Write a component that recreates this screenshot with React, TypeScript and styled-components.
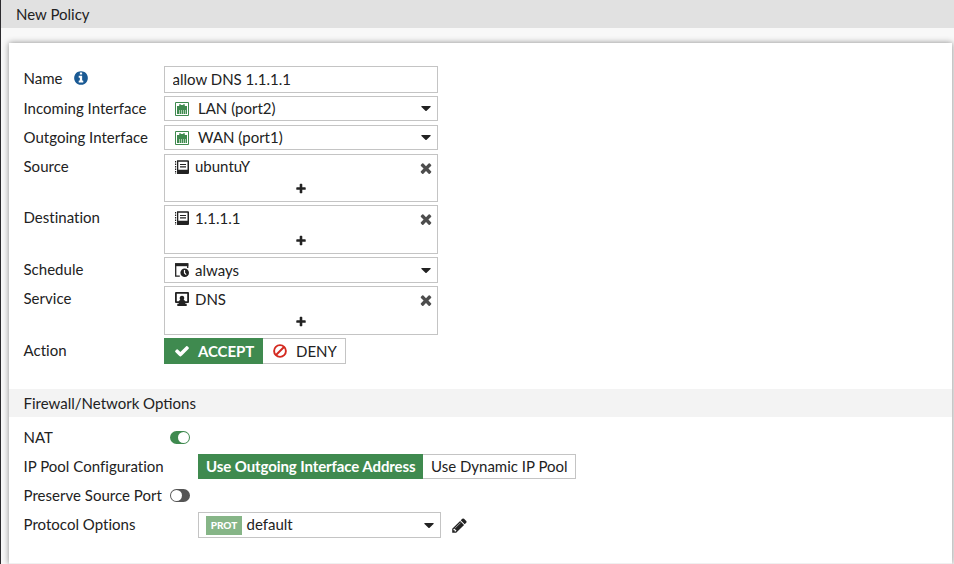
import React from "react";
import styled, { createGlobalStyle } from "styled-components";

const GlobalStyle = createGlobalStyle`
  * { box-sizing: border-box; }
  body {
    margin: 0;
    overflow: hidden;
    background: #f8f8f8;
    color: #222;
    font: 15px/20px Lato, "Liberation Sans", sans-serif;
  }
`;

const Page = styled.div`
  height: 564px;
  overflow: hidden;
  border-left: 1px solid #2c2b2e;
  display: flex;
  flex-direction: column;
`;

const TitleBar = styled.header`
  flex: none;
  height: 28px;
  padding: 4px 15px 0;
  background: #e1e1e1;
`;

const Panel = styled.main`
  flex: 1;
  display: flex;
  flex-direction: column;
  margin: 15px 2px 0 8px;
  padding-top: 23px;
  background: #fff;
  box-shadow: 0 0 6px rgba(0, 0, 0, 0.45);
`;

const Row = styled.div<{ $h: number; $gap?: number }>`
  flex: none;
  display: flex;
  align-items: flex-start;
  height: ${(p) => p.$h}px;
  margin-bottom: ${(p) => p.$gap ?? 3}px;
  padding-left: 14.5px;
`;

const Label = styled.div<{ $w?: number; $top?: number }>`
  flex: none;
  display: flex;
  align-items: center;
  gap: 10px;
  width: ${(p) => p.$w ?? 140.5}px;
  height: 20px;
  margin-top: ${(p) => p.$top ?? 2}px;
  letter-spacing: 0.02px;
  white-space: nowrap;
`;

const Box = styled.div<{ $w?: number }>`
  width: ${(p) => p.$w ?? 274}px;
  height: 100%;
  border: 1px solid #c4c4c4;
  background: #fff;
`;

const NameInput = styled.input`
  width: 274px;
  height: 100%;
  padding: 0 7px 1px 7.5px;
  border: 1px solid #c4c4c4;
  outline: none;
  color: inherit;
  font: inherit;
`;

const Select = styled(Box)<{ $pad?: number }>`
  display: flex;
  align-items: center;
  padding: 0 6px 0 ${(p) => p.$pad ?? 10}px;
`;

const List = styled(Box)`
  display: flex;
  flex-direction: column;
`;

const Entry = styled.div`
  display: flex;
  align-items: center;
  height: 24px;
  padding: 0 3px 0 10px;
`;

const Value = styled.span<{ $gap: number; $lift?: number }>`
  flex: 1;
  margin-left: ${(p) => p.$gap}px;
  padding-bottom: ${(p) => p.$lift ?? 0}px;
`;

const AddButton = styled.div<{ $top: number }>`
  display: flex;
  justify-content: center;
  padding-top: ${(p) => p.$top}px;
`;

const Segment = styled.div<{ $on?: boolean; $w: number; $pad?: number; $lift?: number }>`
  display: flex;
  align-items: center;
  width: ${(p) => p.$w}px;
  height: 100%;
  padding: 0 0 ${(p) => p.$lift ?? 0}px ${(p) => p.$pad ?? 8}px;
  border: 1px solid #c4c4c4;
  border-width: ${(p) => (p.$on ? "0" : "1px 1px 1px 0")};
  background: ${(p) => (p.$on ? "#3f8a4f" : "#fff")};
  color: ${(p) => (p.$on ? "#fff" : "inherit")};
  font-weight: ${(p) => (p.$on ? 700 : 400)};
  letter-spacing: ${(p) => (p.$on ? "-0.09px" : "normal")};
  white-space: nowrap;
`;

const Section = styled.h2`
  flex: none;
  height: 28px;
  margin: 25px 0 7px;
  padding: 4px 14.5px 0;
  background: #f3f3f3;
  font-size: 15px;
  font-weight: 400;
`;

const Toggle = styled.div<{ $on?: boolean; $top?: number }>`
  display: flex;
  justify-content: ${(p) => (p.$on ? "flex-end" : "flex-start")};
  width: 20px;
  height: 13px;
  margin: ${(p) => p.$top ?? 7}px 0 0 6px;
  padding: 1px;
  border-radius: 7px;
  background: ${(p) => (p.$on ? "#3f8a4f" : "#555")};
  &::after {
    content: "";
    width: 11px;
    height: 11px;
    border-radius: 50%;
    background: #fff;
  }
`;

const Tag = styled.span`
  width: 36px;
  height: 19px;
  background: #86b587;
  color: #fff;
  font-size: 10px;
  font-weight: 900;
  line-height: 19px;
  text-align: center;
`;

const Footer = styled.div`
  height: 1px;
  margin-top: auto;
  background: #f0f0f0;
`;

const Svg = styled.svg<{ $ml?: number; $mt?: number }>`
  flex: none;
  display: block;
  margin-left: ${(p) => p.$ml ?? 0}px;
  margin-top: ${(p) => p.$mt ?? 0}px;
`;

const PATHS = {
  times:
    "M1490 1322q0 40-28 68l-136 136q-28 28-68 28t-68-28l-294-294-294 294q-28 28-68 28t-68-28l-136-136q-28-28-28-68t28-68l294-294-294-294q-28-28-28-68t28-68l136-136q28-28 68-28t68 28l294 294 294-294q28-28 68-28t68 28l136 136q28 28 28 68t-28 68l-294 294 294 294q28 28 28 68z",
  check:
    "M1671 566q0 40-28 68l-724 724-136 136q-28 28-68 28t-68-28l-136-136-362-362q-28-28-28-68t28-68l136-136q28-28 68-28t68 28l294 295 656-657q28-28 68-28t68 28l136 136q28 28 28 68z",
  plus:
    "M1600 736v192q0 40-28 68t-68 28h-416v416q0 40-28 68t-68 28h-192q-40 0-68-28t-28-68v-416h-416q-40 0-68-28t-28-68v-192q0-40 28-68t68-28h416v-416q0-40 28-68t68-28h192q40 0 68 28t28 68v416h416q40 0 68 28t28 68z",
  info:
    "M1152 1376v-160q0-14-9-23t-23-9h-96v-512q0-14-9-23t-23-9h-320q-14 0-23 9t-9 23v160q0 14 9 23t23 9h96v320h-96q-14 0-23 9t-9 23v160q0 14 9 23t23 9h448q14 0 23-9t9-23zm-128-896v-160q0-14-9-23t-23-9h-192q-14 0-23 9t-9 23v160q0 14 9 23t23 9h192q14 0 23-9t9-23zm640 416q0 209-103 385.5t-279.5 279.5-385.5 103-385.5-103-279.5-279.5-103-385.5 103-385.5 279.5-279.5 385.5-103 385.5 103 279.5 279.5 103 385.5z",
  pencil:
    "M491 1536l91-91-235-235-91 91v107h128v128h107zm523-928q0-22-22-22-10 0-17 7l-542 542q-7 7-7 17 0 22 22 22 10 0 17-7l542-542q7-7 7-17zm-54-192l416 416-832 832h-416v-416zm683 96q0 53-37 90l-166 166-416-416 166-165q36-38 90-38 53 0 91 38l235 234q37 39 37 91z",
};

type GlyphProps = { name: keyof typeof PATHS; size: number; color?: string; ml?: number; mt?: number };

const Glyph = ({ name, size, color = "#222", ml, mt }: GlyphProps) => (
  <Svg $ml={ml} $mt={mt} width={size} height={size} viewBox="0 0 1792 1792" fill={color}>
    <path d={PATHS[name]} />
  </Svg>
);

const Caret = () => (
  <Svg width="10" height="5" viewBox="0 0 10 5" fill="#222">
    <path d="M.9 0h8.200q1 0 .4.900L5.600 4.700q-.6.500-1.200 0L.5.900Q-.1 0 .9 0z" />
  </Svg>
);

const PortIcon = () => (
  <Svg width="14" height="14" viewBox="0 0 14 14">
    <path d="M.5.500h13v13H.5z" fill="#fff" stroke="#3f8a4f" />
    <path d="M2 12V4h2.200V2.200h1.600V3h2.400v-.8h1.600V4H12v8z" fill="#3f8a4f" />
    <path d="M4.500 8V12M6.500 8V12M8.500 8V12M10.500 8V12" stroke="#b5d4b9" strokeWidth=".9" />
  </Svg>
);

const AddressIcon = () => (
  <Svg width="14" height="14" viewBox="0 0 14 14">
    <path d="M.6 1v13" stroke="#222" strokeWidth="1.200" strokeDasharray="1.500 1" />
    <path fillRule="evenodd" d="M2 .2h11q1 0 1 1V13q0 1-1 1H2zM3.300 1.700v8.100h9.200V1.700z" fill="#222" />
    <path d="M5 4.500h6M5 6.900h6" stroke="#222" strokeWidth="1.100" />
  </Svg>
);

const ScheduleIcon = () => (
  <Svg width="14" height="14" viewBox="0 0 14 14">
    <path d="M4.800 13.100H.7V1h12v4" fill="none" stroke="#222" strokeWidth="1.300" />
    <path d="M0 .3h13.300v2.900H0z" fill="#222" />
    <circle cx="9.700" cy="9.700" r="4.300" fill="#222" />
    <path d="M9.500 7v3l1.700 1.700" fill="none" stroke="#fff" strokeWidth="1.200" />
  </Svg>
);

const ServiceIcon = () => (
  <Svg width="14" height="14" viewBox="0 0 14 14" fill="#222">
    <path fillRule="evenodd" d="M1 0h12q1 0 1 1v9q0 1-1 1H1q-1 0-1-1V1q0-1 1-1zM1.800 1.800v7.400h10.400V1.800z" />
    <path d="M7 3.800c2.600 0 2.700 3 1.600 4.200 1.300.4 1.700 1 1.700 2v1.800h1.400V14H2.300v-2.200h1.400V10c0-1 .4-1.600 1.700-2C4.300 6.800 4.400 3.800 7 3.800z" />
  </Svg>
);

const DenyIcon = () => (
  <Svg width="14" height="14" viewBox="0 0 14 14" fill="none" stroke="#d42a20" strokeWidth="1.900">
    <circle cx="7" cy="7" r="5.900" />
    <path d="M3 11L11 3" />
  </Svg>
);

type ListFieldProps = { icon: React.ReactNode; text: string; lift?: number; addTop?: number };

const ListField = ({ icon, text, lift = 1, addTop = 5 }: ListFieldProps) => (
  <List>
    <Entry>
      {icon}
      <Value $gap={6} $lift={lift}>{text}</Value>
      <Glyph name="times" size={16} color="#4d4d4d" mt={addTop === 5 ? 2 : 1} />
    </Entry>
    <AddButton $top={addTop}>
      <Glyph name="plus" size={12} />
    </AddButton>
  </List>
);

export default function App() {
  return (
    <Page>
      <GlobalStyle />
      <TitleBar>New Policy</TitleBar>
      <Panel>
        <Row $h={27}>
          <Label>
            Name
            <Glyph name="info" size={16} color="#1a5a94" />
          </Label>
          <NameInput defaultValue="allow DNS 1.1.1.1" />
        </Row>
        <Row $h={25} $gap={4}>
          <Label>Incoming Interface</Label>
          <Select>
            <PortIcon />
            <Value $gap={9} $lift={2}>LAN (port2)</Value>
            <Caret />
          </Select>
        </Row>
        <Row $h={25} $gap={4}>
          <Label>Outgoing Interface</Label>
          <Select>
            <PortIcon />
            <Value $gap={9} $lift={2}>WAN (port1)</Value>
            <Caret />
          </Select>
        </Row>
        <Row $h={48}>
          <Label>Source</Label>
          <ListField icon={<AddressIcon />} text="ubuntuY" lift={2} addTop={4} />
        </Row>
        <Row $h={49}>
          <Label>Destination</Label>
          <ListField icon={<AddressIcon />} text="1.1.1.1" lift={0} />
        </Row>
        <Row $h={26}>
          <Label>Schedule</Label>
          <Select>
            <ScheduleIcon />
            <Value $gap={6}>always</Value>
            <Caret />
          </Select>
        </Row>
        <Row $h={49}>
          <Label>Service</Label>
          <ListField icon={<ServiceIcon />} text="DNS" />
        </Row>
        <Row $h={26} $gap={0}>
          <Label>Action</Label>
          <Segment $on $w={99}>
            <Glyph name="check" size={16} color="#fff" ml={2} />
            <Value $gap={8}>ACCEPT</Value>
          </Segment>
          <Segment $w={83} $pad={10}>
            <DenyIcon />
            <Value $gap={9}>DENY</Value>
          </Segment>
        </Row>
        <Section>Firewall/Network Options</Section>
        <Row $h={27}>
          <Label $top={3}>NAT</Label>
          <Toggle $on />
        </Row>
        <Row $h={25} $gap={4}>
          <Label $w={174.5}>IP Pool Configuration</Label>
          <Segment $on $w={225} $lift={2}>Use Outgoing Interface Address</Segment>
          <Segment $w={153} $lift={2}>Use Dynamic IP Pool</Segment>
        </Row>
        <Row $h={25} $gap={4}>
          <Label>Preserve Source Port</Label>
          <Toggle $top={6} />
        </Row>
        <Row $h={26}>
          <Label $w={174.5}>Protocol Options</Label>
          <Select $w={243} $pad={7}>
            <Tag>PROT</Tag>
            <Value $gap={4.5} $lift={2}>default</Value>
            <Caret />
          </Select>
          <Glyph name="pencil" size={17} ml={10} mt={5} />
        </Row>
        <Footer />
      </Panel>
    </Page>
  );
}
